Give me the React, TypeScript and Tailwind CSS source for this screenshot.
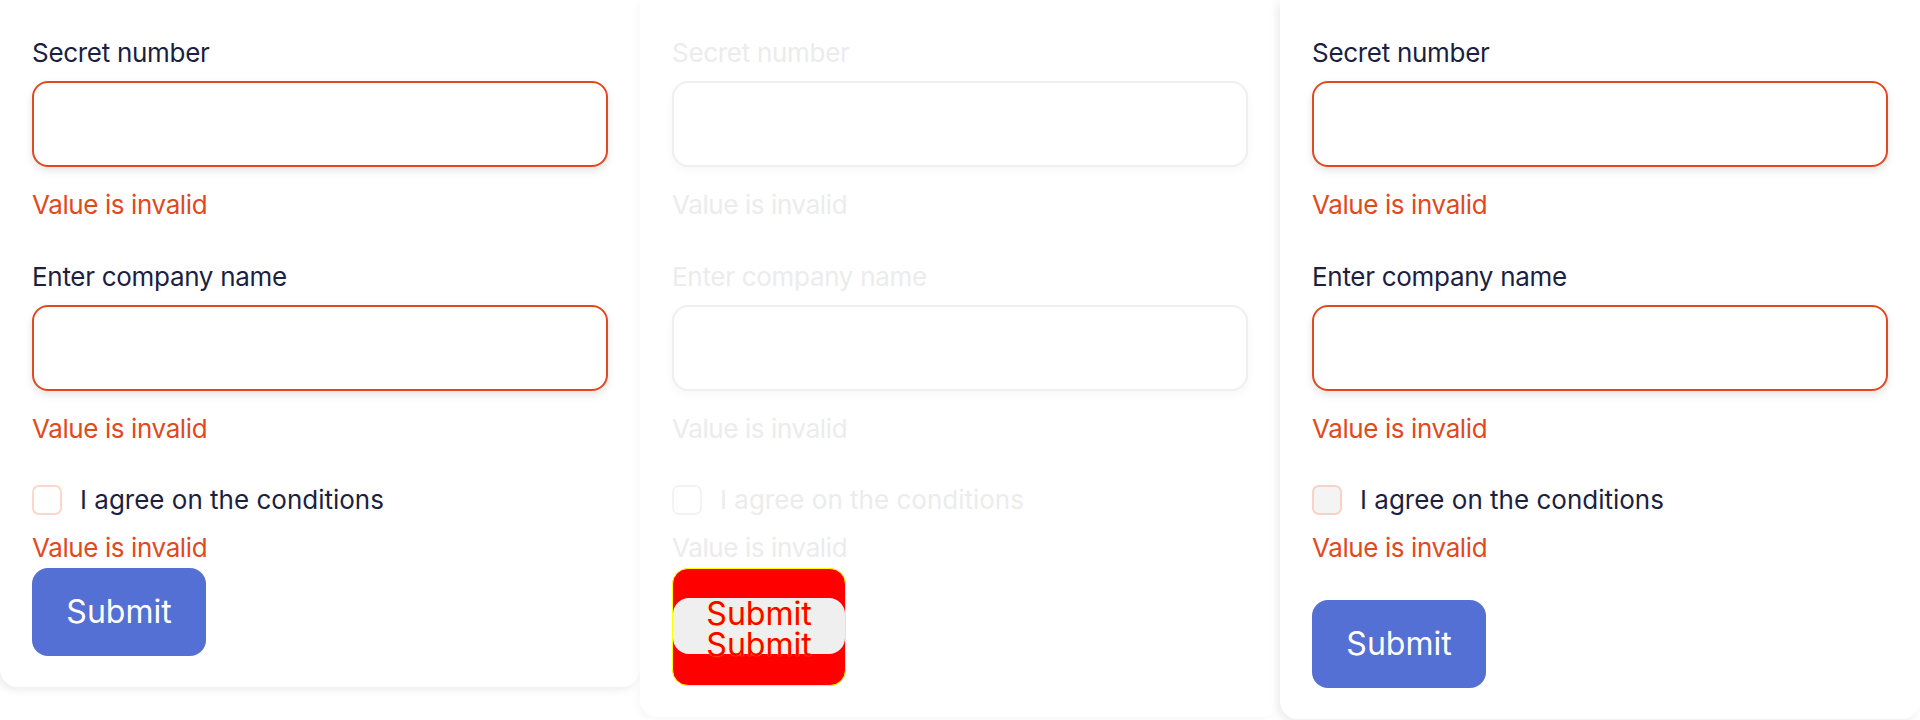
import React from 'react';

const font = { fontFamily: 'Inter, "Noto Sans", sans-serif' };

type FieldProps = { label: string; disabled?: boolean; first?: boolean };

const Field = ({ label, disabled, first }: FieldProps) => (
  <div className={first ? '' : 'mt-[40px]'}>
    <label className={`block text-[26px] leading-[32px] tracking-[-0.3px] ${disabled ? 'text-[#ececec]' : 'text-[#1c1f3f]'}`}>
      {label}
    </label>
    <input
      disabled={disabled}
      className={`mt-[12px] block w-full h-[86px] rounded-[16px] border-2 bg-white outline-none ${
        disabled
          ? 'border-[#efefef] shadow-[0_4px_8px_rgba(0,0,0,0.03)]'
          : 'border-[#e14a1e] shadow-[0_4px_8px_rgba(0,0,0,0.1)]'
      }`}
    />
    <p className={`mt-[22px] text-[26px] leading-[32px] tracking-[-0.4px] ${disabled ? 'text-[#ececec]' : 'text-[#e2491d]'}`}>
      Value is invalid
    </p>
  </div>
);

const Checkbox = ({ disabled, filled }: { disabled?: boolean; filled?: boolean }) => (
  <div className="mt-[39px] flex items-center h-[32px]">
    <span
      className={`w-[30px] h-[30px] rounded-[7px] border-2 ${
        disabled ? 'border-[#f3f3f3] bg-white' : filled ? 'border-[#f9d2c6] bg-[#f4f4f4]' : 'border-[#fcd7cb] bg-white'
      }`}
    />
    <span className={`ml-[18px] text-[26px] leading-[32px] ${disabled ? 'text-[#ececec]' : 'text-[#1c1f3f]'}`}>
      I agree on the conditions
    </span>
  </div>
);

const CheckError = ({ disabled }: { disabled?: boolean }) => (
  <p className={`mt-[16px] text-[26px] leading-[32px] tracking-[-0.4px] ${disabled ? 'text-[#ececec]' : 'text-[#e2491d]'}`}>
    Value is invalid
  </p>
);

const SubmitButton = ({ spaced }: { spaced?: boolean }) => (
  <button
    className={`${spaced ? 'mt-[36px]' : 'mt-[4px]'} w-[174px] h-[88px] rounded-[16px] bg-[#5470d4] text-white text-[32px] leading-[32px]`}
  >
    Submit
  </button>
);

const BrokenButton = () => (
  <button className="mt-[4px] w-[174px] rounded-[16px] border border-[#ffff00] bg-[#ff0000] py-[31px] block">
    <span className="block rounded-[16px] bg-[#efefef] h-[56px] text-[32px] leading-[32px] text-[#ff0000] [text-shadow:0_0_1px_#ffff00]">
      <span className="block -mt-[2px]">Submit</span>
      <span className="block -mt-[1px]">Submit</span>
    </span>
  </button>
);

export default function App() {
  return (
    <div className="w-[1920px] h-[720px] overflow-hidden bg-white flex items-start" style={font}>
      <div className="w-[640px] bg-white rounded-b-[18px] shadow-[-3px_3px_8px_rgba(0,0,0,0.08)] px-[32px] pt-[37px] pb-[31px]">
        <Field label="Secret number" first />
        <Field label="Enter company name" />
        <Checkbox />
        <CheckError />
        <SubmitButton />
      </div>

      <div className="w-[640px] bg-white rounded-b-[18px] shadow-[-3px_3px_8px_rgba(0,0,0,0.03)] px-[32px] pt-[37px] pb-[31px]">
        <Field label="Secret number" disabled first />
        <Field label="Enter company name" disabled />
        <Checkbox disabled />
        <CheckError disabled />
        <BrokenButton />
      </div>

      <div className="w-[640px] bg-white rounded-b-[18px] shadow-[-3px_3px_8px_rgba(0,0,0,0.08)] px-[32px] pt-[37px] pb-[31px]">
        <Field label="Secret number" first />
        <Field label="Enter company name" />
        <Checkbox filled />
        <CheckError />
        <SubmitButton spaced />
      </div>
    </div>
  );
}
